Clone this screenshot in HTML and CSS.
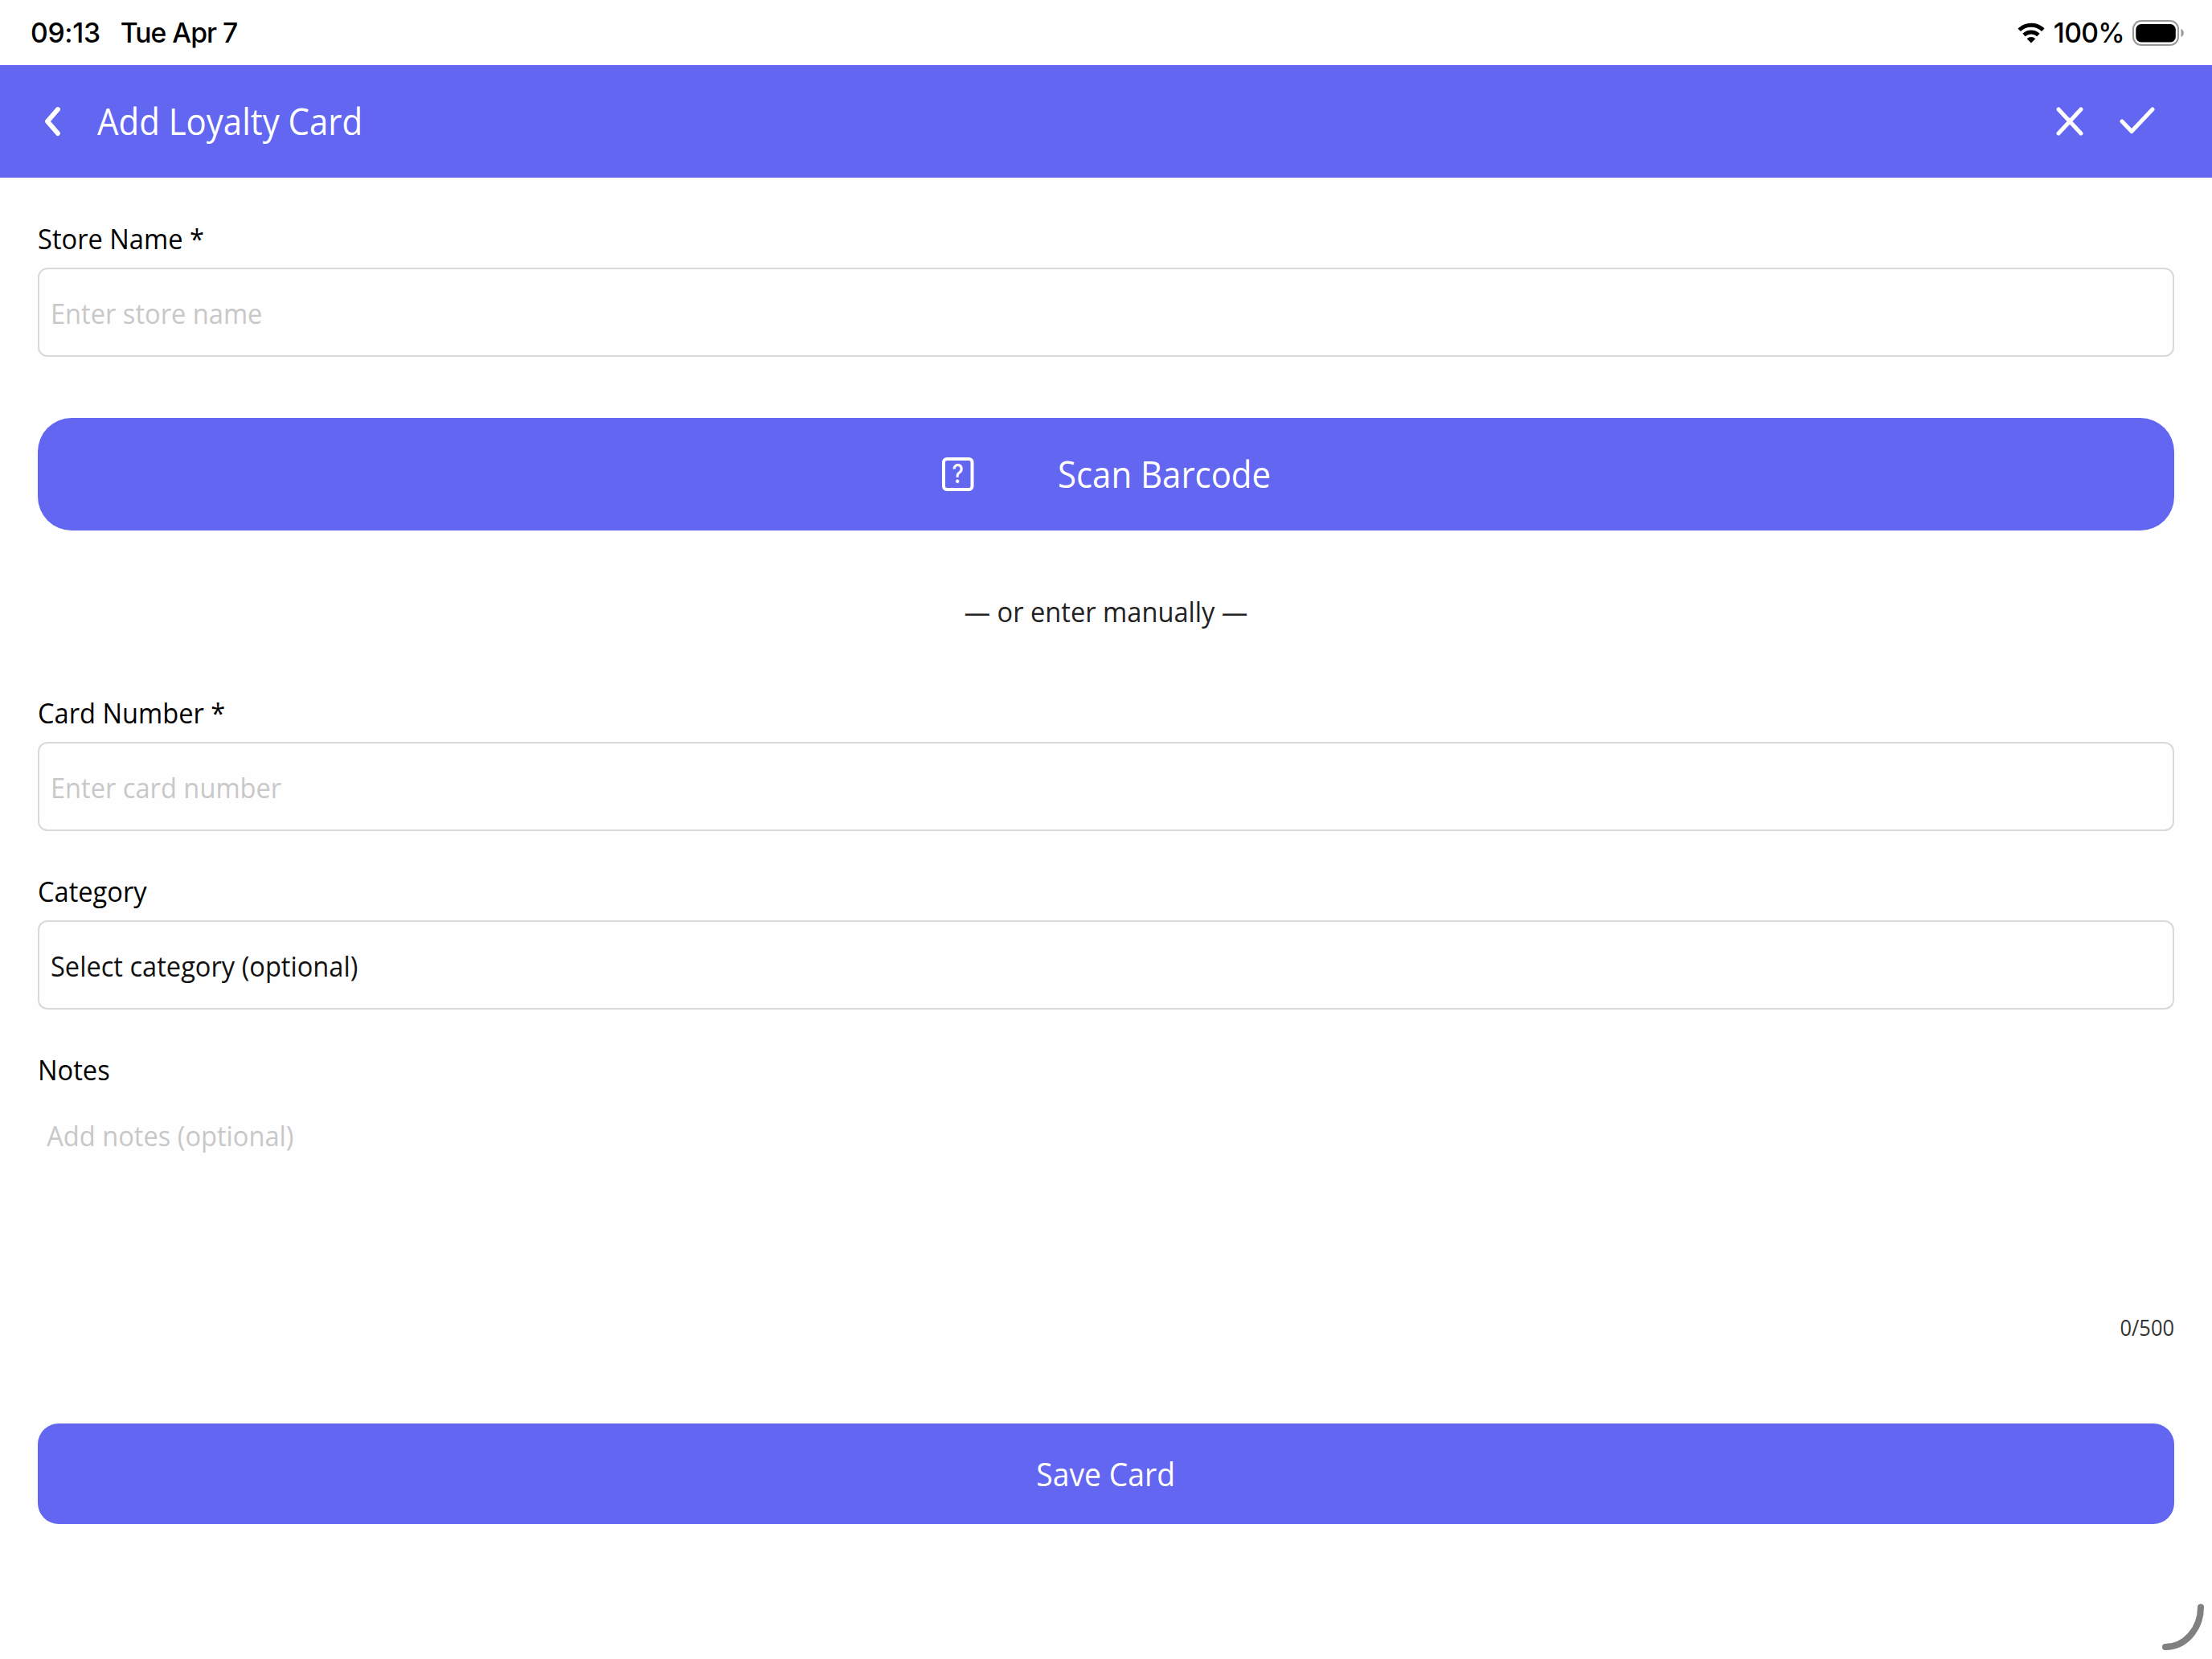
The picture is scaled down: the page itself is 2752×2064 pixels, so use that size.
FILE: index.html
```html
<!DOCTYPE html>
<html lang="en">
<head>
    <meta charset="UTF-8">
    <title>Add Loyalty Card</title>
    <link rel="stylesheet" href="styles.css">
</head>
<body>
    <div class="status-bar">
        <span class="time">09:13</span>
        <span class="date">Tue Apr 7</span>
        <svg class="wifi" width="34" height="26" viewBox="0 0 34 26">
            <path d="M2.2 9.2a21.5 21.5 0 0 1 29.6 0" fill="none" stroke="#000" stroke-width="5"/>
            <path d="M8 15.6a13 13 0 0 1 18 0" fill="none" stroke="#000" stroke-width="4.8"/>
            <path d="M17 25.5l-5.3-5.3a7.6 7.6 0 0 1 10.6 0z"/>
        </svg>
        <span class="percent">100%</span>
        <svg class="battery" width="65" height="32" viewBox="0 0 65 32">
            <rect x="1" y="1" width="56" height="30" rx="10" fill="none" stroke="#999" stroke-width="2"/>
            <rect x="4.3" y="5" width="49.5" height="22.5" rx="6.5"/>
            <path d="M60.5 11c4.4 1.6 4.4 8.4 0 10z" fill="#999"/>
        </svg>
    </div>
    <div class="header">
        <svg class="back" width="20" height="38" viewBox="0 0 20 38">
            <path d="M17 4L4 19l13 15"/>
        </svg>
        <h1><span class="text">Add Loyalty Card</span></h1>
        <svg class="close" width="34" height="38" viewBox="0 0 34 38">
            <path d="M3 4l28 30M31 4L3 34"/>
        </svg>
        <svg class="done" width="44" height="38" viewBox="0 0 44 38">
            <path d="M3 19l12 12.5L41 4"/>
        </svg>
    </div>
    <form class="form">
        <div class="field">
            <label for="store">Store Name *</label>
            <div class="box">
                <input type="text" id="store" placeholder="Enter store name">
            </div>
        </div>
        <button type="button" class="scan">
            <svg width="40" height="42" viewBox="0 0 40 42">
                <rect x="2" y="2" width="35.5" height="38" rx="4" fill="none" stroke="#fff" stroke-width="4"/>
                <text transform="translate(19.7 32) scale(0.85 1)" text-anchor="middle">?</text>
            </svg>
            <span class="text">Scan Barcode</span>
        </button>
        <p class="divider">— or enter manually —</p>
        <div class="field">
            <label for="number">Card Number *</label>
            <div class="box">
                <input type="text" id="number" placeholder="Enter card number">
            </div>
        </div>
        <div class="field">
            <label for="category">Category</label>
            <div class="box">
                <input type="text" id="category" value="Select category (optional)" readonly>
            </div>
        </div>
        <div class="field">
            <label for="notes">Notes</label>
            <textarea id="notes" placeholder="Add notes (optional)" maxlength="500"></textarea>
        </div>
        <div class="counter">0/500</div>
        <button type="button" class="save"><span class="text">Save Card</span></button>
    </form>
    <svg class="corner" width="60" height="64" viewBox="0 0 60 64">
        <path d="M50 6.5A44 49.5 0 0 1 6 56"/>
    </svg>
</body>
</html>
```

FILE: styles.css
```css
body {
    margin: 0;
    height: 2064px;
    overflow: hidden;
    background-color: #fefefe;
    color: #000;
    font-family: "Open Sans", sans-serif;
    font-size: 35px;
}
.status-bar {
    display: flex;
    align-items: center;
    height: 81px;
    padding: 0 34px 0 38px;
    box-sizing: border-box;
    background-color: #fff;
    font-family: Inter, sans-serif;
    font-size: 33.7px;
    font-weight: 500;
    letter-spacing: -0.3px;
}
.date {
    margin-left: 25px;
    letter-spacing: -1px;
}
.wifi {
    margin-left: auto;
}
.percent {
    margin: 0 10px 0 11px;
    letter-spacing: -0.7px;
}
.header {
    display: flex;
    align-items: center;
    height: 140px;
    padding: 0 71px 0 55px;
    box-sizing: border-box;
    background-color: #6366f1;
    color: #fff;
}
.header svg path {
    fill: none;
    stroke: #fff;
    stroke-width: 5;
    stroke-linecap: round;
    stroke-linejoin: round;
}
.header .back path {
    stroke-width: 5.8;
}
.header h1 {
    margin: 0 auto 2px 46px;
    font-size: 45px;
    font-weight: 400;
}
.done {
    margin-left: 45px;
}
/* slightly condensed text */
.text, label, .counter, .divider, input, textarea {
    transform: scaleX(0.932);
    transform-origin: left;
}
.text {
    display: inline-block;
}
.form {
    display: flex;
    flex-direction: column;
    padding: 52px 47px 0;
}
.field {
    display: flex;
    flex-direction: column;
}
.field + .field {
    margin-top: 51px;
}
label {
    height: 48px;
    line-height: 48px;
    margin-bottom: 12px;
}
input, textarea, button {
    font: inherit;
    box-sizing: border-box;
    margin: 0;
    outline: none;
}
.box {
    height: 111px;
    box-sizing: border-box;
    border: 2px solid #d9d9d9;
    border-radius: 12px;
    overflow: hidden;
}
input {
    display: block;
    width: 107%;
    height: 100%;
    padding: 1px 15px 0;
    border: none;
    background: none;
    color: #111;
}
textarea {
    width: 107%;
    height: 222px;
    padding: 22px 12px;
    border: none;
    background: none;
    line-height: 48px;
    resize: none;
}
::placeholder {
    color: #c8c8c8;
    opacity: 1;
}
button {
    display: flex;
    align-items: center;
    justify-content: center;
    padding: 0;
    border: none;
    background-color: #6366f1;
    color: #fff;
}
.scan {
    height: 140px;
    margin-top: 76px;
    gap: 104px;
    border-radius: 42px;
    font-size: 45px;
}
.scan .text {
    margin: 0 -21px 2px 0;
}
.scan svg text {
    fill: #fff;
    font-family: Inter, sans-serif;
    font-size: 32px;
    font-weight: 500;
}
.divider {
    margin: 77px 0 78px;
    line-height: 48px;
    text-align: center;
    transform-origin: center;
    color: #222;
}
.counter {
    margin-top: 45px;
    line-height: 36px;
    font-size: 27.3px;
    text-align: right;
    transform-origin: right;
    color: #333;
}
.save {
    height: 125px;
    margin-top: 101px;
    border-radius: 26px;
    font-size: 40px;
}
.save .text {
    transform-origin: center;
}
.corner {
    position: absolute;
    right: 4px;
    bottom: 7px;
}
.corner path {
    fill: none;
    stroke: #808080;
    stroke-width: 8;
    stroke-linecap: round;
}
```
